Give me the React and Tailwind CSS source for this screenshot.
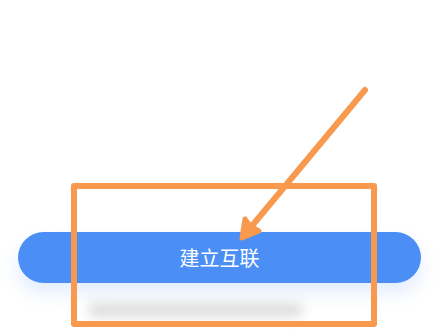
export default function App() {
  return (
    <div
      className="relative w-[439px] h-[332px] overflow-hidden bg-white"
      style={{ fontFamily: '"Noto Sans CJK SC", "Noto Sans", sans-serif' }}
    >
      {/* page content */}
      <div className="flex flex-col pt-[232px] px-[18px]">
        <button className="h-[51px] w-full rounded-full bg-[#4b8ff6] text-white text-[20px] leading-none shadow-[0_10px_18px_rgba(75,143,246,0.16)]">
          建立互联
        </button>
        <div className="mt-[20px] ml-[70px] h-[14px] w-[215px] rounded-full bg-[#dcdcdc] blur-[6px]" />
      </div>

      {/* annotation: highlight box */}
      <div className="absolute left-[71px] top-[183px] w-[306px] h-[144px] border-[6px] border-[#f8994d] rounded-[3px]" />

      {/* annotation: arrow */}
      <svg className="absolute inset-0" width="439" height="332" viewBox="0 0 439 332">
        <g stroke="#f8994d" strokeLinecap="round" strokeLinejoin="round" fill="#f8994d">
          <line x1="365" y1="90" x2="246" y2="233" strokeWidth="6" />
          <polygon points="245,219 242,238 259,231 250,226" strokeWidth="5" />
        </g>
      </svg>
    </div>
  );
}
